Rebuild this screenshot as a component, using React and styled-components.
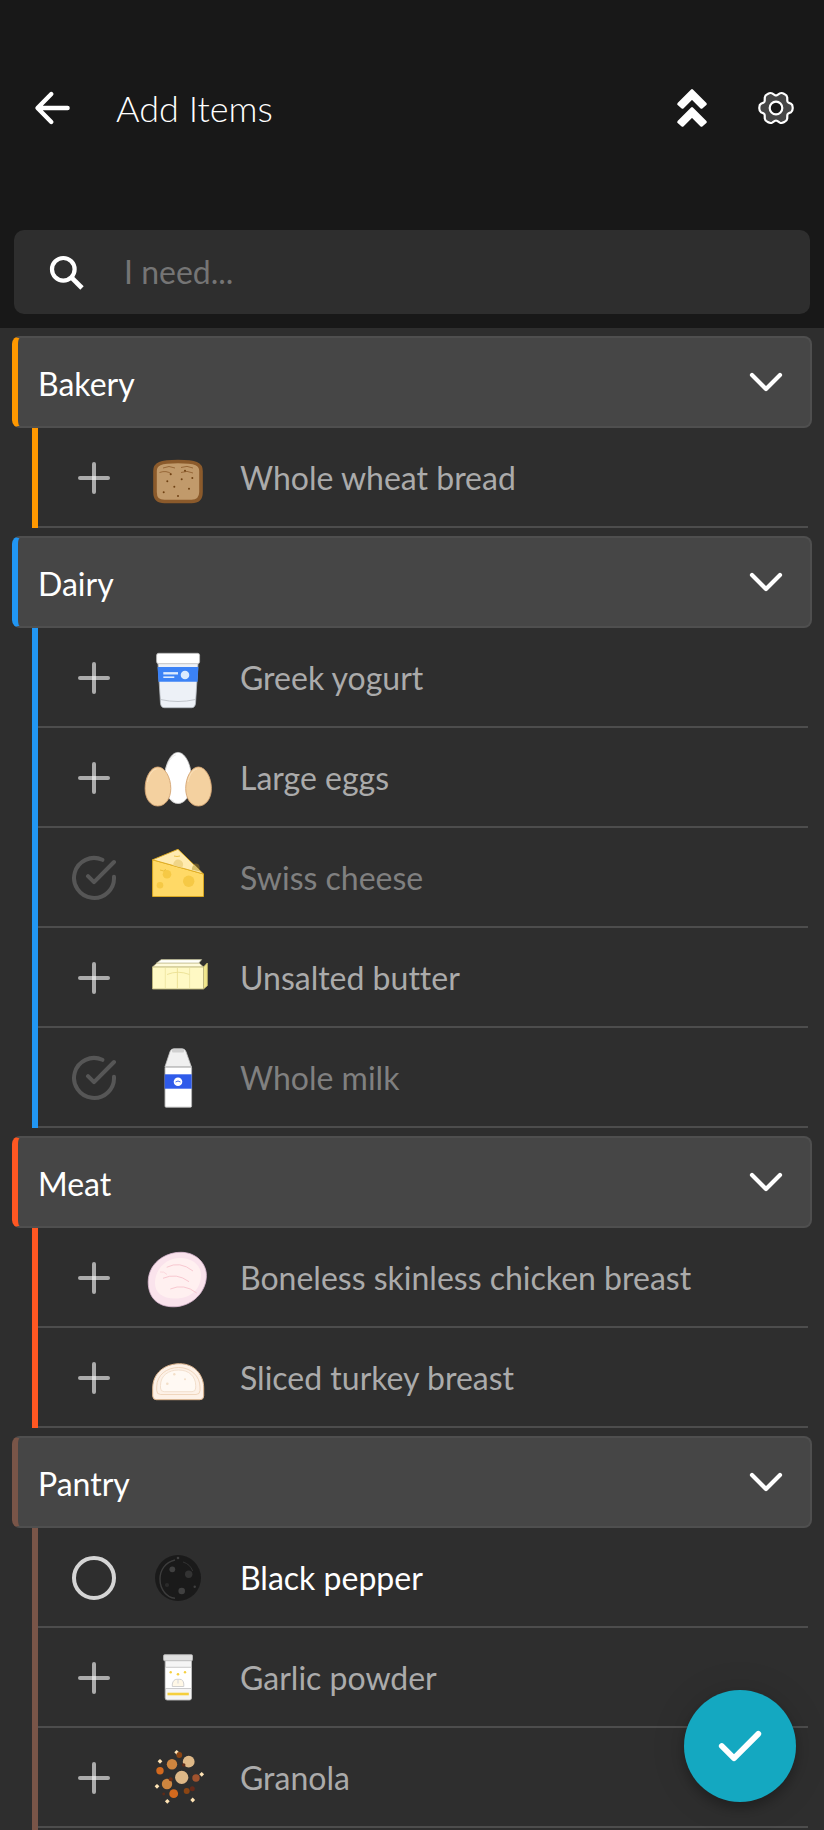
import { useState } from "react";
import styled, { createGlobalStyle } from "styled-components";

const GlobalStyle = createGlobalStyle`
  * {
    box-sizing: border-box;
  }

  body {
    margin: 0;
    background-color: #2e2e2e;
    color: #fff;
    font-family: Lato, sans-serif;
    font-size: 32px;
    line-height: 40px;
    font-variant-ligatures: none;
  }

  button,
  input {
    font: inherit;
    font-variant-ligatures: none;
    color: inherit;
  }
`;

const Page = styled.div`
  display: flex;
  flex-direction: column;
  height: 100vh;
  overflow: hidden;
`;

const Header = styled.header`
  flex-shrink: 0;
  padding: 48px 14px 14px;
  background-color: #181818;
`;

const Toolbar = styled.div`
  display: flex;
  align-items: center;
  height: 120px;
  margin-bottom: 62px;
  padding: 0 2px 0 6px;
`;

const IconButton = styled.button`
  display: flex;
  align-items: center;
  justify-content: center;
  width: 64px;
  height: 64px;
  margin-left: ${(props) => (props.$spaced ? "20px" : "0")};
  padding: 0;
  background: none;
  border: none;
  cursor: pointer;
`;

const Title = styled.h1`
  flex: 1;
  margin: 0;
  padding-left: 32px;
  font-size: 36px;
  font-weight: 300;
`;

const SearchBox = styled.label`
  display: flex;
  align-items: center;
  gap: 34px;
  height: 84px;
  padding: 0 28px;
  background-color: #2e2e2e;
  border-radius: 10px;

  svg {
    flex-shrink: 0;
  }

  input {
    flex: 1;
    min-width: 0;
    padding: 0;
    background: none;
    border: none;
    outline: none;

    &::placeholder {
      color: #757575;
    }
  }
`;

const List = styled.main`
  flex: 1;
  min-height: 0;
  overflow: hidden;
  padding: 0 12px;
`;

const Section = styled.section`
  padding-top: 8px;
`;

const SectionHeading = styled.h2`
  margin: 0;
  font-size: 32px;
  font-weight: 400;
`;

const SectionButton = styled.button`
  display: flex;
  align-items: center;
  justify-content: space-between;
  width: 100%;
  height: 92px;
  padding: 0 20px;
  background-color: #464646;
  border: 2px solid #4f4f4f;
  border-left: 6px solid ${(props) => props.$color};
  border-radius: 8px;
  cursor: pointer;

  span {
    padding-top: 4px;
  }
`;

const Items = styled.ul`
  margin: 0 4px 0 20px;
  padding: 0;
  list-style: none;
  border-left: 6px solid ${(props) => props.$color};

  ${Section}:last-child & {
    padding-bottom: 120px;
  }
`;

const Item = styled.li`
  display: flex;
  align-items: center;
  height: 100px;
  padding: 2px 0 0 24px;
  border-bottom: 2px solid #4d4d4d;
  color: ${(props) => textColors[props.$status]};
`;

const ItemButton = styled.button`
  display: flex;
  align-items: center;
  width: 100%;
  padding: 0 0 0 8px;
  background: none;
  border: none;
  text-align: left;
  cursor: pointer;

  .picture {
    flex-shrink: 0;
    margin: 0 26px 0 24px;
  }
`;

const DoneButton = styled.button`
  position: fixed;
  right: 28px;
  bottom: 28px;
  width: 112px;
  height: 112px;
  padding: 0;
  background-color: #14a8c1;
  border: none;
  border-radius: 50%;
  box-shadow: 0 6px 12px rgba(0, 0, 0, 0.25), 0 2px 36px rgba(0, 0, 0, 0.12);
  cursor: pointer;

  svg {
    display: block;
  }
`;

const textColors = {
  add: "#ababab",
  done: "#808080",
  selected: "#ffffff",
};

/* ---------- interface icons ---------- */

const lineProps = {
  fill: "none",
  strokeLinecap: "round",
  strokeLinejoin: "round",
  "aria-hidden": true,
};

const BackIcon = () => (
  <svg width="48" height="48" viewBox="0 0 48 48" {...lineProps} stroke="#fff" strokeWidth="4.4">
    <path d="M39.600 24H10M23.300 10 9.500 24l13.800 14" />
    <path d="M10 24l4-3v6z" fill="#fff" strokeWidth="2" />
  </svg>
);

const CollapseIcon = () => (
  <svg width="48" height="48" viewBox="0 0 48 48" {...lineProps}>
    <path
      d="M24 6.500 37.500 20l-4 3.500L24 14l-9.500 9.500-4-3.500zM24 24.500 37.500 38l-4 3.500L24 32l-9.500 9.500-4-3.500z"
      fill="#fff"
      stroke="#fff"
      strokeWidth="2.6"
    />
  </svg>
);

const GearIcon = () => (
  <svg width="48" height="48" viewBox="-24 -24 48 48" {...lineProps} stroke="#fff" strokeWidth="2.2">
    <path
      d="M15 -4.200Q16.800 -3.200 16.700 0Q16.800 3.200 15 4.200L12.200 5.600Q11.200 6.200 11.300 7.600L11.200 10.600Q11 12.800 8.300 14Q5.700 15.600 3.800 14.600L1.200 12.900Q0 12.200 -1.200 12.900L-3.800 14.600Q-5.700 15.600 -8.300 14Q-11 12.800 -11.200 10.600L-11.300 7.600Q-11.200 6.200 -12.200 5.600L-15 4.200Q-16.800 3.200 -16.700 0Q-16.800 -3.200 -15 -4.200L-12.200 -5.600Q-11.200 -6.200 -11.300 -7.600L-11.200 -10.600Q-11 -12.800 -8.300 -14Q-5.700 -15.600 -3.800 -14.600L-1.200 -12.900Q0 -12.200 1.200 -12.900L3.800 -14.600Q5.700 -15.600 8.300 -14Q11 -12.800 11.200 -10.600L11.300 -7.600Q11.200 -6.200 12.200 -5.600Z"
      fill="#464646"
    />
    <circle r="6.3" fill="#181818" />
  </svg>
);

const SearchIcon = () => (
  <svg width="48" height="48" viewBox="0 0 48 48" {...lineProps} stroke="#fff" strokeWidth="4.2">
    <circle cx="21.3" cy="21.3" r="11.3" />
    <path d="m29.600 29.600 10.400 10.400" strokeWidth="4.8" strokeLinecap="butt" />
  </svg>
);

const ChevronIcon = () => (
  <svg width="48" height="48" viewBox="0 0 48 48" {...lineProps} stroke="#fff" strokeWidth="4.2">
    <path d="m10 17 14 14 14-14" />
  </svg>
);

const CheckIcon = () => (
  <svg width="112" height="112" viewBox="0 0 112 112" {...lineProps} stroke="#fff" strokeWidth="5.8">
    <path d="m37.800 56 12.200 12.200L74.300 43.900" />
  </svg>
);

const StatusIcon = ({ status }) => (
  <svg width="48" height="48" viewBox="0 0 48 48" {...lineProps} strokeWidth="4">
    {status === "add" && (
      <g stroke="#fff" strokeOpacity="0.6">
        <path d="M24 10v28" />
        <path d="M10 24h28" />
      </g>
    )}
    {status === "done" && (
      <path d="M32.400 5.800A20 20 0 1 0 44 22.800M18 22.200l6 6L44 8" stroke="#565656" />
    )}
    {status === "selected" && <circle cx="24" cy="24" r="20" stroke="#d5d5d5" />}
  </svg>
);

/* ---------- product pictures ---------- */

const Picture = ({ children }) => (
  <svg className="picture" width="72" height="72" viewBox="0 0 72 72" fill="none" aria-hidden="true">
    {children}
  </svg>
);

const Bread = () => (
  <Picture>
    <path
      d="M13 29c0-7 5-9.500 23-9.500S59 22 59 29v21c0 6.500-3 9.500-9.500 9.500h-27C16 59.500 13 56.500 13 50z"
      fill="#c19a6b"
      stroke="#8b5a2b"
      strokeWidth="3.6"
    />
    <path
      d="M21 26q6-3 12 0M17.500 30.500q7-2.500 12 1.500M39 25.500q6-2.500 12 .5M39 30.500q6-2.500 12 .5"
      stroke="#8b5a2b"
      strokeWidth="0.8"
    />
    <g fill="#704214">
      <circle cx="28.7" cy="32.3" r="1" />
      <circle cx="43" cy="28.7" r="1" />
      <circle cx="39.7" cy="37.3" r="1" />
      <circle cx="50.3" cy="36" r="1" />
      <circle cx="25.3" cy="39.3" r="1" />
      <circle cx="32.3" cy="44.7" r="1" />
      <circle cx="47" cy="46.7" r="1" />
      <circle cx="21.7" cy="50.3" r="1" />
      <circle cx="36" cy="54" r="1" />
    </g>
  </Picture>
);

const Yogurt = () => (
  <Picture>
    <path
      d="M16 21.500h40l-2.500 40q-.5 4.200-4 4.200h-27q-3.500 0-4-4.200z"
      fill="#edf1f7"
      stroke="#b5bac0"
      strokeWidth="0.8"
    />
    <path d="M15.600 25h40.800l-.8 14.700H16.400z" fill="#3b82f6" />
    <rect x="14.6" y="11.3" width="43" height="10.4" rx="2" fill="#fff" stroke="#bbb" strokeWidth="0.8" />
    <path d="M21.300 31.300H36" stroke="#dbeafe" strokeWidth="2.4" />
    <path d="M21.300 35.200h11" stroke="#dbeafe" strokeWidth="1.6" />
    <circle cx="43" cy="33" r="4.3" fill="#dbeafe" />
    <path d="M18.500 57.500q17.500 4 35 0" stroke="#b5bac0" strokeWidth="0.8" />
  </Picture>
);

const Eggs = () => (
  <Picture>
    <path
      d="M36 10.400c7.500 0 13.600 13 13.600 27.500 0 14-6 23.600-13.600 23.600s-13.600-9.600-13.600-23.600C22.400 23.400 28.500 10.400 36 10.400z"
      fill="#fff"
      stroke="#ccc"
      strokeWidth="0.8"
    />
    <path d="M23.700 27c2-7 6-13 10-14M25 53q2.500 5 7 6.500" stroke="#ddd" strokeWidth="0.7" />
    <g fill="#f4d1a0" stroke="#d4a574" strokeWidth="0.9">
      <path d="M15.800 25c7.200 0 13 10.500 13 21.500 0 10-5.500 17.500-13 17.500s-12.700-7.500-12.700-17.500C3.100 35.500 8.600 25 15.800 25z" />
      <path d="M56.400 25c7.200 0 13 10.500 13 21.500 0 10-5.500 17.500-13 17.500s-12.700-7.500-12.700-17.500c0-11 5.500-21.500 12.700-21.500z" />
    </g>
    <path d="M5.500 40c1-7 5-12.500 9-13M46 40c1-7 5-12.500 9-13" stroke="#fbe3c0" strokeWidth="0.8" />
  </Picture>
);

const Cheese = () => (
  <Picture>
    <circle cx="53.7" cy="25.3" r="3.9" fill="#f0b429" fillOpacity="0.28" />
    <path d="M10.600 17.800v36.700h50.900V32z" fill="#ffd966" stroke="#e0ac1e" strokeWidth="0.9" />
    <path d="M10.600 17.800 36 7.300 61.500 32z" fill="#ffebb0" stroke="#e0ac1e" strokeWidth="0.9" strokeLinejoin="round" />
    <path d="M31.300 23.500a5 5 0 1 1 8.800 2.200z" fill="#f0d587" />
    <path d="M49.800 27.800q.5-5.500 2.900-4.500l5.800 6.200z" fill="#d8bf6d" />
    <g fill="#f6c945">
      <circle cx="25" cy="32.3" r="4.3" />
      <circle cx="46.7" cy="39.3" r="5.7" />
      <circle cx="18" cy="43.3" r="3.3" />
    </g>
    <path d="M32 14q3 1 6 0M18 28q4 2 6-.5" stroke="#e6b82e" strokeWidth="0.8" />
  </Picture>
);

const Butter = () => (
  <Picture>
    <path d="M61.500 25l3.800-4v22.700l-3.800 3.300z" fill="#f0e68c" stroke="#cfc473" strokeWidth="0.8" />
    <path d="M10.500 25l4.500-4h42l4.500 4z" fill="#fffbdc" stroke="#cdc591" strokeWidth="0.7" />
    <path d="M14.500 21l4.800-3.400h40.400L56.900 21z" fill="#fffffa" stroke="#bcb78c" strokeWidth="0.7" />
    <path d="M10.500 25h51v22h-51z" fill="#fff9c4" stroke="#bdb67c" strokeWidth="0.9" />
    <path d="M23.300 26v20M47.600 26v20" stroke="#eee5a3" strokeWidth="0.9" />
    <path d="M35.400 26v20M25 32.500q11-4.500 22.500 0" stroke="#ebe093" strokeWidth="0.9" />
  </Picture>
);

const Milk = () => (
  <Picture>
    <path
      d="M22.900 25 28 9.700q1-3 4-3h8q3 0 4 3L49.400 25z"
      fill="#f0f0f0"
      stroke="#c5c5c5"
      strokeWidth="0.8"
    />
    <rect x="30" y="7" width="12" height="3.6" rx="1" fill="#d0d0d0" />
    <rect x="23" y="25" width="26.6" height="40.2" rx="1" fill="#fff" stroke="#b8b8b8" strokeWidth="0.9" />
    <path d="M23 25h26.600" stroke="#bbb" />
    <path d="M22.700 32.300h27v14.400h-27z" fill="#2f5bea" />
    <circle cx="36" cy="39.7" r="4.3" fill="#fff" />
    <path d="M33.500 40q2.500-2 5 0" stroke="#2f5bea" strokeWidth="0.9" />
  </Picture>
);

const Chicken = () => (
  <Picture>
    <path
      d="M39 10.300c15 0 25.400 11 25.400 23.200C64.400 50 50 64.800 31.500 64.800 14 64.800 6.200 54 6.200 40 6.200 22 22 10.300 39 10.300z"
      fill="#fae3ec"
      stroke="#d9b8d0"
      strokeWidth="0.8"
    />
    <path
      d="M38 16c12 0 21 7 21 17 0 13-9 23.500-26 23.500-13 0-20-6-20-15.500C13 27 24 16 38 16z"
      fill="#fff0f0"
    />
    <g stroke="#f8c8d0" strokeWidth="1">
      <path d="M24.700 25.300q13-6.800 26.300 3.700M21 36.300q13.500-6 26 3.400M28.300 47q13.700-6 26.400 4" />
      <path d="M18 30q4-1 7 2.500" strokeOpacity="0.6" />
    </g>
  </Picture>
);

const Turkey = () => (
  <Picture>
    <path
      d="M10.700 46c0-15 12-24.300 27-24.300S61.700 33 61.700 46v8q0 3.700-3.700 3.700H14.400q-3.700 0-3.700-3.700z"
      fill="#fdf1e7"
      stroke="#dcb48d"
      strokeWidth="1"
    />
    <path
      d="M14.700 45c0-12 10-19.500 22-19.500S58 34 58 45v3.500q0 4-4 4H18.700q-4 0-4-4z"
      stroke="#eed3b8"
      strokeWidth="0.9"
    />
    <path
      d="M18.500 43.500c0-10 8-15.500 18-15.500s17.200 6 17.200 15.500V46q0 3.700-3.700 3.700H22.200q-3.700 0-3.700-3.700z"
      fill="#fff9f3"
      stroke="#f0dcc8"
      strokeWidth="0.9"
    />
    <g fill="#f3dfc8">
      <circle cx="32.3" cy="32.3" r="1.2" />
      <circle cx="43" cy="37.3" r="1" />
      <circle cx="25.3" cy="41.7" r="1.3" />
    </g>
  </Picture>
);

const Pepper = () => (
  <Picture>
    <circle cx="36" cy="36" r="23" fill="#1a1a1a" />
    <path d="M33 18C23 20.500 18 28 18 37c0 11 7 18.500 15 19.300" stroke="#3d3d3d" strokeWidth="1.4" />
    <path d="M41 20c5 1.500 8 4.500 9.700 9" stroke="#333" />
    <circle cx="30.3" cy="27.3" r="2.9" fill="#404040" />
    <circle cx="46.7" cy="32.3" r="3.7" fill="#333" />
    <circle cx="39.7" cy="49" r="3.3" fill="#404040" />
    <circle cx="25" cy="43" r="2.1" fill="#2a2a2a" />
    <circle cx="36" cy="16" r="1.3" fill="#404040" />
    <circle cx="52.7" cy="44.7" r="1.2" fill="#404040" />
  </Picture>
);

const Garlic = () => (
  <Picture>
    <rect x="23.2" y="17" width="26.3" height="41" rx="2" fill="#f5f5f5" stroke="#bbb" strokeWidth="0.9" />
    <path d="M23.600 25.300h25.500v21H23.600z" fill="#fff" />
    <path d="M23.200 25.300h26.300M23.200 46.500h26.300" stroke="#c5c5c5" strokeWidth="0.9" />
    <rect x="21.6" y="12.7" width="28.9" height="6" rx="1" fill="#e0e0e0" stroke="#b8b8b8" strokeWidth="0.9" />
    <path d="M25.500 52h21.300" stroke="#f5cf3d" strokeWidth="2.6" />
    <g fill="#f5d040">
      <circle cx="28.7" cy="30.3" r="1.2" />
      <circle cx="36" cy="32.3" r="1.3" />
      <circle cx="43" cy="30.3" r="1.2" />
    </g>
    <path d="M30.300 44.500V42q1-4.700 4.500-4.700h3q3.500 0 4 4.700v2.500z" fill="#fff8e7" stroke="#ccc" strokeWidth="0.9" />
    <path d="M36 38v3.500" stroke="#ddd" strokeWidth="1.3" />
  </Picture>
);

const granolaPieces = [
  [37.3, 13, 2.9, "#8b4513"],
  [46.7, 19.7, 5.9, "#deb887"],
  [30, 22.3, 5.2, "#cd853f"],
  [41.7, 23, 1.8, "#5c2a18"],
  [18, 28.7, 3.7, "#d2691e"],
  [39.7, 35.3, 6.6, "#deb887"],
  [54, 36, 3.7, "#a0522d"],
  [25, 42, 5.2, "#cd853f"],
  [28.7, 37.3, 2, "#6b2d14"],
  [44.7, 49, 3, "#8b4513"],
  [50.3, 46.7, 2.5, "#652a1a"],
  [31.7, 51.7, 4.4, "#d2691e"],
  [21.7, 52, 1.4, "#5c2a18"],
];

const oatFlakes = [
  [34.7, 10.3],
  [18, 19.3],
  [59.7, 32.3],
  [15, 44.3],
  [50.7, 58],
  [25.3, 59.3],
];

const Granola = () => (
  <Picture>
    {oatFlakes.map(([x, y]) => (
      <path key={`${x}-${y}`} d={`M${x} ${y - 2.4}l2.400 2.400-2.400 2.400-2.400-2.400z`} fill="#ffe4b5" />
    ))}
    {granolaPieces.map(([x, y, r, color]) => (
      <circle key={`${x}-${y}`} cx={x} cy={y} r={r} fill={color} />
    ))}
  </Picture>
);

/* ---------- list ---------- */

const sections = [
  {
    name: "Bakery",
    color: "#ff9800",
    items: [{ name: "Whole wheat bread", status: "add", Image: Bread }],
  },
  {
    name: "Dairy",
    color: "#2196f3",
    items: [
      { name: "Greek yogurt", status: "add", Image: Yogurt },
      { name: "Large eggs", status: "add", Image: Eggs },
      { name: "Swiss cheese", status: "done", Image: Cheese },
      { name: "Unsalted butter", status: "add", Image: Butter },
      { name: "Whole milk", status: "done", Image: Milk },
    ],
  },
  {
    name: "Meat",
    color: "#ff5722",
    items: [
      { name: "Boneless skinless chicken breast", status: "add", Image: Chicken },
      { name: "Sliced turkey breast", status: "add", Image: Turkey },
    ],
  },
  {
    name: "Pantry",
    color: "#795548",
    items: [
      { name: "Black pepper", status: "selected", Image: Pepper },
      { name: "Garlic powder", status: "add", Image: Garlic },
      { name: "Granola", status: "add", Image: Granola },
    ],
  },
];

function Category({ section }) {
  const [open, setOpen] = useState(true);

  return (
    <Section>
      <SectionHeading>
        <SectionButton $color={section.color} aria-expanded={open} onClick={() => setOpen(!open)}>
          <span>{section.name}</span>
          <ChevronIcon />
        </SectionButton>
      </SectionHeading>
      {open && (
        <Items $color={section.color}>
          {section.items.map(({ name, status, Image }) => (
            <Item key={name} $status={status}>
              <ItemButton>
                <StatusIcon status={status} />
                <Image />
                <span>{name}</span>
              </ItemButton>
            </Item>
          ))}
        </Items>
      )}
    </Section>
  );
}

export default function App() {
  return (
    <Page>
      <GlobalStyle />
      <Header>
        <Toolbar>
          <IconButton aria-label="Back">
            <BackIcon />
          </IconButton>
          <Title>Add Items</Title>
          <IconButton aria-label="Collapse all">
            <CollapseIcon />
          </IconButton>
          <IconButton $spaced aria-label="Settings">
            <GearIcon />
          </IconButton>
        </Toolbar>
        <SearchBox>
          <SearchIcon />
          <input type="text" placeholder="I need..." aria-label="I need" />
        </SearchBox>
      </Header>
      <List>
        {sections.map((section) => (
          <Category key={section.name} section={section} />
        ))}
      </List>
      <DoneButton aria-label="Done">
        <CheckIcon />
      </DoneButton>
    </Page>
  );
}
